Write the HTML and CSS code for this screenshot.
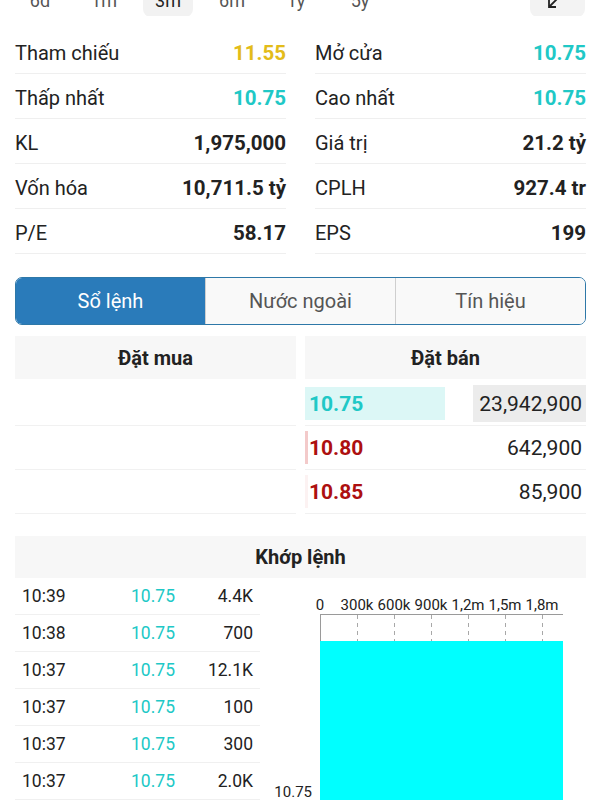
FILE: index.html
```html
<!DOCTYPE html>
<html lang="vi">
<head>
    <meta charset="UTF-8">
    <meta name="viewport" content="width=device-width, initial-scale=1.0">
    <title>Sổ lệnh</title>
    <link rel="stylesheet" href="styles.css">
</head>
<body>
    <div class="ranges">
        <div class="ranges-inner">
            <span class="range">6d</span>
            <span class="range">1m</span>
            <span class="range active">3m</span>
            <span class="range">6m</span>
            <span class="range">1y</span>
            <span class="range">5y</span>
            <span class="zoom-btn">
                <svg width="16" height="16" viewBox="0 0 16 16"><path d="M14 2 L3 13 M3 6 V13 H10" fill="none" stroke="#222" stroke-width="1.8"/></svg>
            </span>
        </div>
    </div>

    <div class="stats">
        <div class="stat"><span>Tham chiếu</span><b class="ref">11.55</b></div>
        <div class="stat"><span>Mở cửa</span><b class="up">10.75</b></div>
        <div class="stat"><span>Thấp nhất</span><b class="up">10.75</b></div>
        <div class="stat"><span>Cao nhất</span><b class="up">10.75</b></div>
        <div class="stat"><span>KL</span><b>1,975,000</b></div>
        <div class="stat"><span>Giá trị</span><b>21.2 tỷ</b></div>
        <div class="stat"><span>Vốn hóa</span><b>10,711.5 tỷ</b></div>
        <div class="stat"><span>CPLH</span><b>927.4 tr</b></div>
        <div class="stat"><span>P/E</span><b>58.17</b></div>
        <div class="stat"><span>EPS</span><b>199</b></div>
    </div>

    <div class="tabs">
        <div class="tab active">Sổ lệnh</div>
        <div class="tab">Nước ngoài</div>
        <div class="tab">Tín hiệu</div>
    </div>

    <div class="book">
        <div class="book-col">
            <div class="book-head">Đặt mua</div>
            <div class="book-row"></div>
            <div class="book-row"></div>
            <div class="book-row"></div>
        </div>
        <div class="book-col">
            <div class="book-head">Đặt bán</div>
            <div class="book-row">
                <span class="price up best">10.75</span>
                <span class="vol best-vol">23,942,900</span>
            </div>
            <div class="book-row">
                <span class="price down bar">10.80</span>
                <span class="vol">642,900</span>
            </div>
            <div class="book-row">
                <span class="price down bar-faint">10.85</span>
                <span class="vol">85,900</span>
            </div>
        </div>
    </div>

    <div class="match">
        <div class="match-head">Khớp lệnh</div>
        <div class="match-body">
            <div class="trades">
                <div class="trade"><span>10:39</span><span class="up">10.75</span><span class="qty">4.4K</span></div>
                <div class="trade"><span>10:38</span><span class="up">10.75</span><span class="qty">700</span></div>
                <div class="trade"><span>10:37</span><span class="up">10.75</span><span class="qty">12.1K</span></div>
                <div class="trade"><span>10:37</span><span class="up">10.75</span><span class="qty">100</span></div>
                <div class="trade"><span>10:37</span><span class="up">10.75</span><span class="qty">300</span></div>
                <div class="trade"><span>10:37</span><span class="up">10.75</span><span class="qty">2.0K</span></div>
            </div>
            <div class="chart">
                <svg width="340" height="222" viewBox="0 0 340 222">
                    <g class="axis-labels" text-anchor="middle">
                        <text x="60" y="32">0</text>
                        <text x="97" y="32">300k</text>
                        <text x="134" y="32">600k</text>
                        <text x="171" y="32">900k</text>
                        <text x="208" y="32">1,2m</text>
                        <text x="245" y="32">1,5m</text>
                        <text x="282" y="32">1,8m</text>
                    </g>
                    <line x1="60" y1="36.5" x2="303" y2="36.5" stroke="#9a9a9a" stroke-width="1"/>
                    <line x1="60.5" y1="36" x2="60.5" y2="222" stroke="#9a9a9a" stroke-width="1"/>
                    <g stroke="#a8a8a8" stroke-width="1" stroke-dasharray="4 4">
                        <line x1="97.5" y1="37" x2="97.5" y2="63"/>
                        <line x1="134.5" y1="37" x2="134.5" y2="63"/>
                        <line x1="171.5" y1="37" x2="171.5" y2="63"/>
                        <line x1="208.5" y1="37" x2="208.5" y2="63"/>
                        <line x1="245.5" y1="37" x2="245.5" y2="63"/>
                        <line x1="282.5" y1="37" x2="282.5" y2="63"/>
                    </g>
                    <rect x="60" y="63" width="243" height="160" fill="#00ffff"/>
                    <text class="bar-label" x="52" y="219" text-anchor="end">10.75</text>
                </svg>
            </div>
        </div>
    </div>
</body>
</html>
```
FILE: styles.css
```css
body{
    margin: 0;
    background: #fff;
    color: #222;
    font-family: Roboto, "Noto Sans", sans-serif;
}
.up{
    color: #20c8c6;
}
.down{
    color: #ad1010;
}
.ref{
    color: #e3bc1a;
}

/* dải chọn khoảng thời gian, bị cắt phía trên */
.ranges{
    height: 16px;
    overflow: hidden;
    padding: 0 15px;
}
.ranges-inner{
    display: flex;
    align-items: center;
    height: 34px;
    margin-top: -17px;
}
.range{
    width: 50px;
    height: 34px;
    margin-right: 14px;
    display: flex;
    align-items: center;
    justify-content: center;
    border-radius: 8px;
    font-size: 18px;
    color: #555;
}
.range.active{
    background: #f2f2f2;
    color: #222;
}
.zoom-btn{
    margin-left: auto;
    width: 55px;
    height: 34px;
    border-radius: 8px;
    background: #f3f3f3;
    display: flex;
    align-items: flex-end;
    justify-content: center;
    box-sizing: border-box;
    padding: 0 8px 7px 0;
}

/* bảng thông số */
.stats{
    display: grid;
    grid-template-columns: 1fr 1fr;
    column-gap: 29px;
    padding: 13px 14px 0 15px;
}
.stat{
    height: 45px;
    box-sizing: border-box;
    padding-top: 4px;
    display: flex;
    align-items: center;
    justify-content: space-between;
    border-bottom: 1px solid #efefef;
    font-size: 20px;
}
.stat b{
    font-weight: 700;
    font-size: 20.5px;
}

/* tab */
.tabs{
    display: flex;
    height: 48px;
    margin: 23px 14px 0 15px;
    border: 1.5px solid #2e78a8;
    border-radius: 7px;
    overflow: hidden;
    box-sizing: border-box;
}
.tab{
    flex: 1;
    display: flex;
    align-items: center;
    justify-content: center;
    font-size: 20px;
    color: #555;
    background: #f9f9f9;
    border-left: 1px solid #cfcfcf;
}
.tab.active{
    background: #2a7bba;
    color: #fff;
    border-left: 0;
}

/* sổ lệnh */
.book{
    display: grid;
    grid-template-columns: 1fr 1fr;
    column-gap: 9px;
    margin-top: 11px;
    padding: 0 14px 0 15px;
}
.book-head{
    height: 43px;
    margin-bottom: 3px;
    display: flex;
    align-items: center;
    justify-content: center;
    background: #f7f7f7;
    font-size: 20px;
    font-weight: 700;
}
.book-row{
    height: 43px;
    display: flex;
    align-items: center;
    justify-content: space-between;
    border-bottom: 1px solid #f1f1f1;
    font-size: 21px;
}
.price{
    height: 33px;
    display: flex;
    align-items: center;
    padding-left: 1px;
    border-left: 3px solid transparent;
    font-weight: 700;
}
.price.best{
    width: 136px;
    background: #dcf7f6;
}
.price.bar{
    border-left-color: #f3caca;
}
.price.bar-faint{
    border-left-color: #fcf2f2;
}
.vol{
    height: 37px;
    display: flex;
    align-items: center;
    padding: 0 4px 0 6px;
}
.best-vol{
    background: #ececec;
}

/* khớp lệnh */
.match{
    margin: 22px 14px 0 15px;
}
.match-head{
    height: 42px;
    display: flex;
    align-items: center;
    justify-content: center;
    background: #f7f7f7;
    font-size: 20px;
    font-weight: 700;
}
.match-body{
    display: flex;
}
.trades{
    width: 245px;
}
.trade{
    height: 36px;
    display: grid;
    grid-template-columns: 95px 86px 64px;
    align-items: center;
    border-bottom: 1px solid #f0f0f0;
    font-size: 17.5px;
}
.trade span:first-child{
    padding-left: 7px;
}
.trade span:nth-child(2){
    text-align: center;
}
.trade .qty{
    text-align: right;
    padding-right: 7px;
}
.chart svg{
    display: block;
}
.axis-labels text,
.bar-label{
    font-family: Roboto, sans-serif;
    font-size: 15px;
    fill: #222;
}
```
